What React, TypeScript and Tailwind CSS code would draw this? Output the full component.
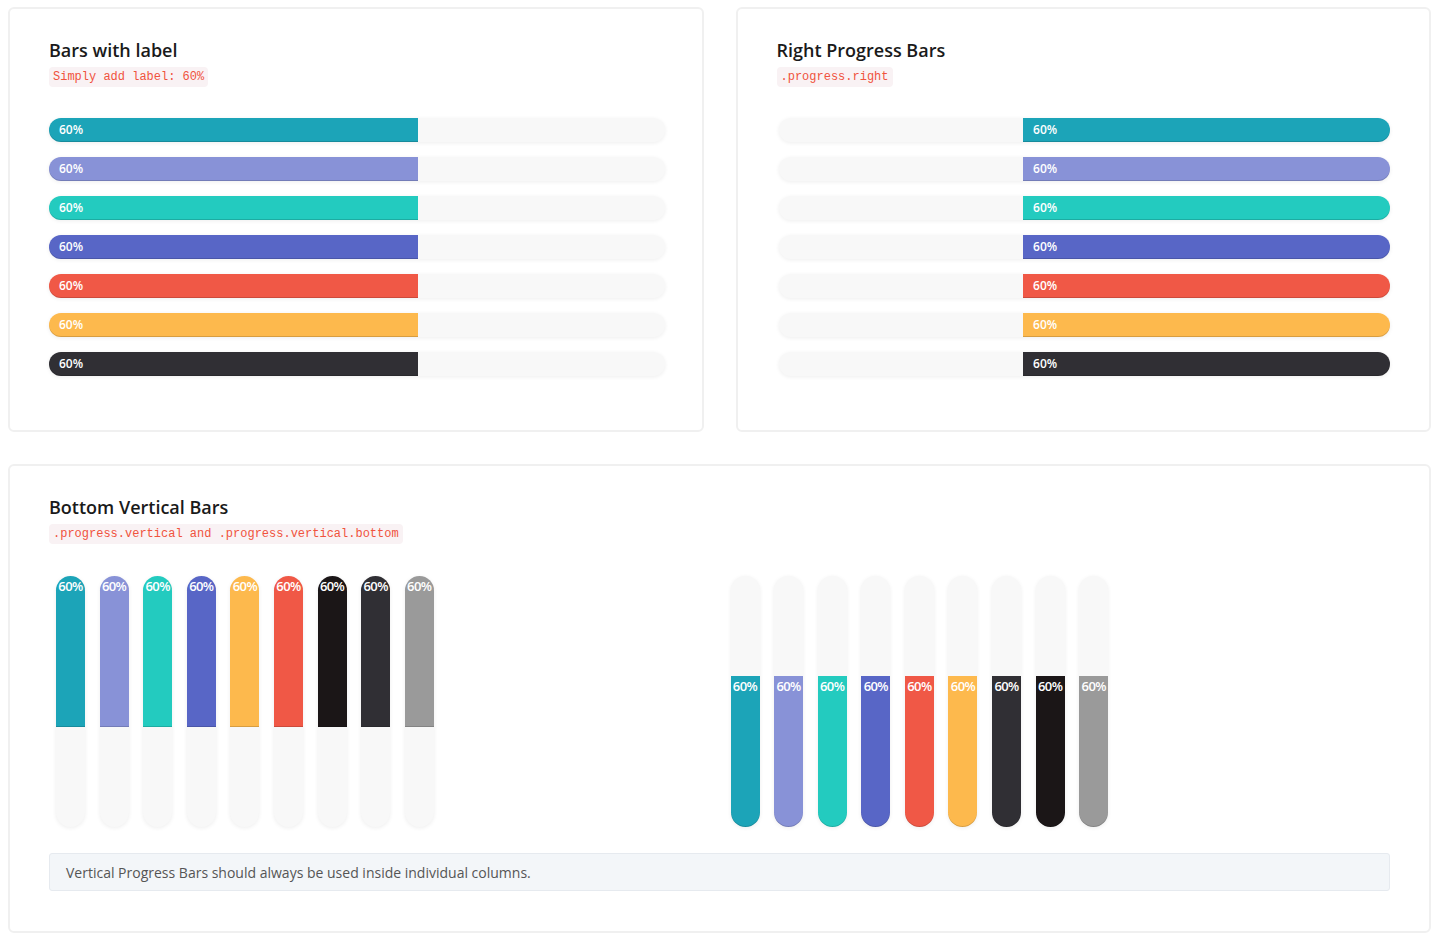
const colors = {
  teal: 'bg-[#1ca4b8]',
  lavender: 'bg-[#8892d7]',
  turquoise: 'bg-[#23cbbf]',
  indigo: 'bg-[#5866c6]',
  red: 'bg-[#f05846]',
  orange: 'bg-[#fdb94d]',
  dark: 'bg-[#302f34]',
  black: 'bg-[#1b1617]',
  gray: 'bg-[#9a9a9a]',
};

const rowColors = [colors.teal, colors.lavender, colors.turquoise, colors.indigo, colors.red, colors.orange, colors.dark];
const topColors = [colors.teal, colors.lavender, colors.turquoise, colors.indigo, colors.orange, colors.red, colors.black, colors.dark, colors.gray];
const bottomColors = [colors.teal, colors.lavender, colors.turquoise, colors.indigo, colors.red, colors.orange, colors.dark, colors.black, colors.gray];

const track = 'bg-[#f8f8f8] shadow-[0_1px_4px_rgba(0,0,0,0.07)]';
const edge = 'shadow-[inset_0_-1px_0_rgba(0,0,0,0.15)]';

function Header({ title, code }: { title: string; code: string }) {
  return (
    <div className="flex flex-col items-start">
      <h3 className="text-[18px] leading-[26px] font-semibold text-[#1a1a1a]">{title}</h3>
      <code className="mt-[4px] px-[4px] h-[20px] leading-[20px] rounded bg-[#f9f2f4] text-[#f0533d] text-[12px] font-['Liberation_Mono',monospace]">
        {code}
      </code>
    </div>
  );
}

function HBar({ color, right }: { color: string; right?: boolean }) {
  return (
    <div className={`h-6 rounded-full flex ${right ? 'justify-end' : ''} ${track}`}>
      <div
        className={`w-[60%] h-full ${color} ${edge} ${right ? 'rounded-r-full' : 'rounded-l-full'} text-white text-[12px] font-semibold leading-6 pl-[10px]`}
      >
        60%
      </div>
    </div>
  );
}

function VBar({ color, bottom }: { color: string; bottom?: boolean }) {
  return (
    <div className={`w-[29px] h-[251px] rounded-full flex flex-col ${bottom ? 'justify-end' : ''} ${track}`}>
      <div
        className={`h-[60%] w-full ${color} ${edge} ${bottom ? 'rounded-b-full' : 'rounded-t-full'} text-white text-[13px] font-semibold leading-[20px] text-center tracking-[-0.6px] whitespace-nowrap`}
      >
        60%
      </div>
    </div>
  );
}

export default function App() {
  return (
    <div className="min-h-screen bg-white pt-[7px] pl-2 pr-[9px] font-['Open_Sans',sans-serif]">
      <div className="grid grid-cols-2 gap-8">
        <div className="border-2 border-[#f0f0f0] rounded-md px-[39px] pt-[28px] pb-[54px]">
          <Header title="Bars with label" code="Simply add label: 60%" />
          <div className="mt-[31px] flex flex-col gap-[15px] -mr-[2px]">
            {rowColors.map((c, i) => (
              <HBar key={i} color={c} />
            ))}
          </div>
        </div>
        <div className="border-2 border-[#f0f0f0] rounded-md px-[39px] pt-[28px] pb-[54px]">
          <Header title="Right Progress Bars" code=".progress.right" />
          <div className="mt-[31px] flex flex-col gap-[15px] ml-[2px]">
            {rowColors.map((c, i) => (
              <HBar key={i} color={c} right />
            ))}
          </div>
        </div>
      </div>

      <div className="mt-8 border-2 border-[#f0f0f0] rounded-md px-[39px] pt-[28px] pb-[40px]">
        <Header title="Bottom Vertical Bars" code=".progress.vertical and .progress.vertical.bottom" />
        <div className="mt-[32px] grid grid-cols-2">
          <div className="flex gap-[14.6px] pl-[7px]">
            {topColors.map((c, i) => (
              <VBar key={i} color={c} />
            ))}
          </div>
          <div className="flex gap-[14.6px] pl-[11px]">
            {bottomColors.map((c, i) => (
              <VBar key={i} color={c} bottom />
            ))}
          </div>
        </div>
        <div className="mt-[26px] h-[38px] flex items-center px-4 border border-[#e6eaef] rounded-[3px] bg-[#f3f6f9] text-[14px] text-[#555]">
          Vertical Progress Bars should always be used inside individual columns.
        </div>
      </div>
    </div>
  );
}
